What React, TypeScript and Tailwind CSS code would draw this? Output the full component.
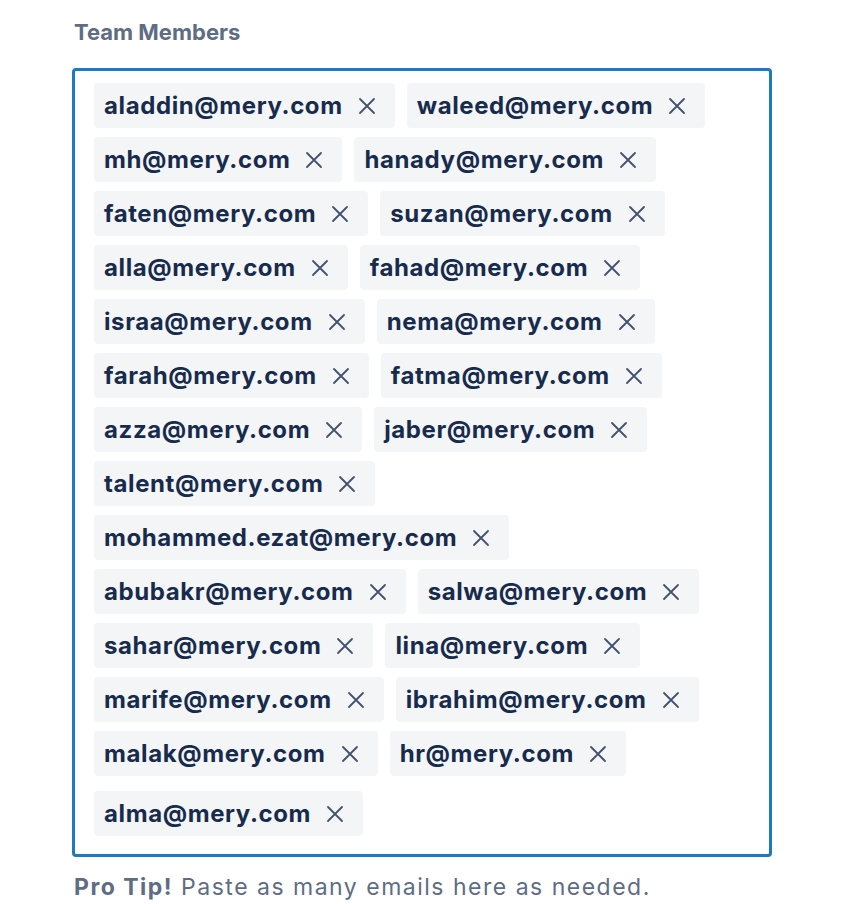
const EMAILS = [
  "aladdin@mery.com",
  "waleed@mery.com",
  "mh@mery.com",
  "hanady@mery.com",
  "faten@mery.com",
  "suzan@mery.com",
  "alla@mery.com",
  "fahad@mery.com",
  "israa@mery.com",
  "nema@mery.com",
  "farah@mery.com",
  "fatma@mery.com",
  "azza@mery.com",
  "jaber@mery.com",
  "talent@mery.com",
  "mohammed.ezat@mery.com",
  "abubakr@mery.com",
  "salwa@mery.com",
  "sahar@mery.com",
  "lina@mery.com",
  "marife@mery.com",
  "ibrahim@mery.com",
  "malak@mery.com",
  "hr@mery.com",
  "alma@mery.com",
];

function CloseIcon() {
  return (
    <svg width="18" height="18" viewBox="0 0 18 18" fill="none" stroke="currentColor" strokeWidth="1.8" strokeLinecap="round">
      <path d="M2 2L16 16M16 2L2 16" />
    </svg>
  );
}

function Tag({ email }: { email: string }) {
  return (
    <div className="flex h-[45px] items-center rounded-[4px] bg-[#f4f5f7] pl-[10px] pr-[19px]">
      <span className="text-[24px] font-bold leading-none tracking-[0.6px] text-[#172b4d]">{email}</span>
      <button type="button" className="ml-[15px] flex items-center text-[#42526e]">
        <CloseIcon />
      </button>
    </div>
  );
}

export default function App() {
  return (
    <div className="min-h-screen bg-white font-['Inter','Noto_Sans',sans-serif]">
      <div className="w-[700px] ml-[72px] pt-[20px]">
        <label className="block pl-[2px] text-[22px] font-bold leading-[24px] text-[#5e6c84]">
          Team Members
        </label>
        <div className="mt-[24px] rounded-[4px] border-[3px] border-[#1a7bc3] pt-3 pb-3 pl-[19px] pr-[19px]">
          <div className="flex flex-wrap items-center gap-x-3 gap-y-[9px]">
            {EMAILS.map((email) => (
              <Tag key={email} email={email} />
            ))}
            <input className="h-[57px] min-w-[120px] flex-1 bg-transparent outline-none" />
          </div>
        </div>
        <p className="mt-[16px] pl-[2px] text-[23px] leading-[28px] tracking-[1.5px] text-[#5e6c84]">
          <span className="font-bold">Pro Tip!</span> Paste as many emails here as needed.
        </p>
      </div>
    </div>
  );
}
